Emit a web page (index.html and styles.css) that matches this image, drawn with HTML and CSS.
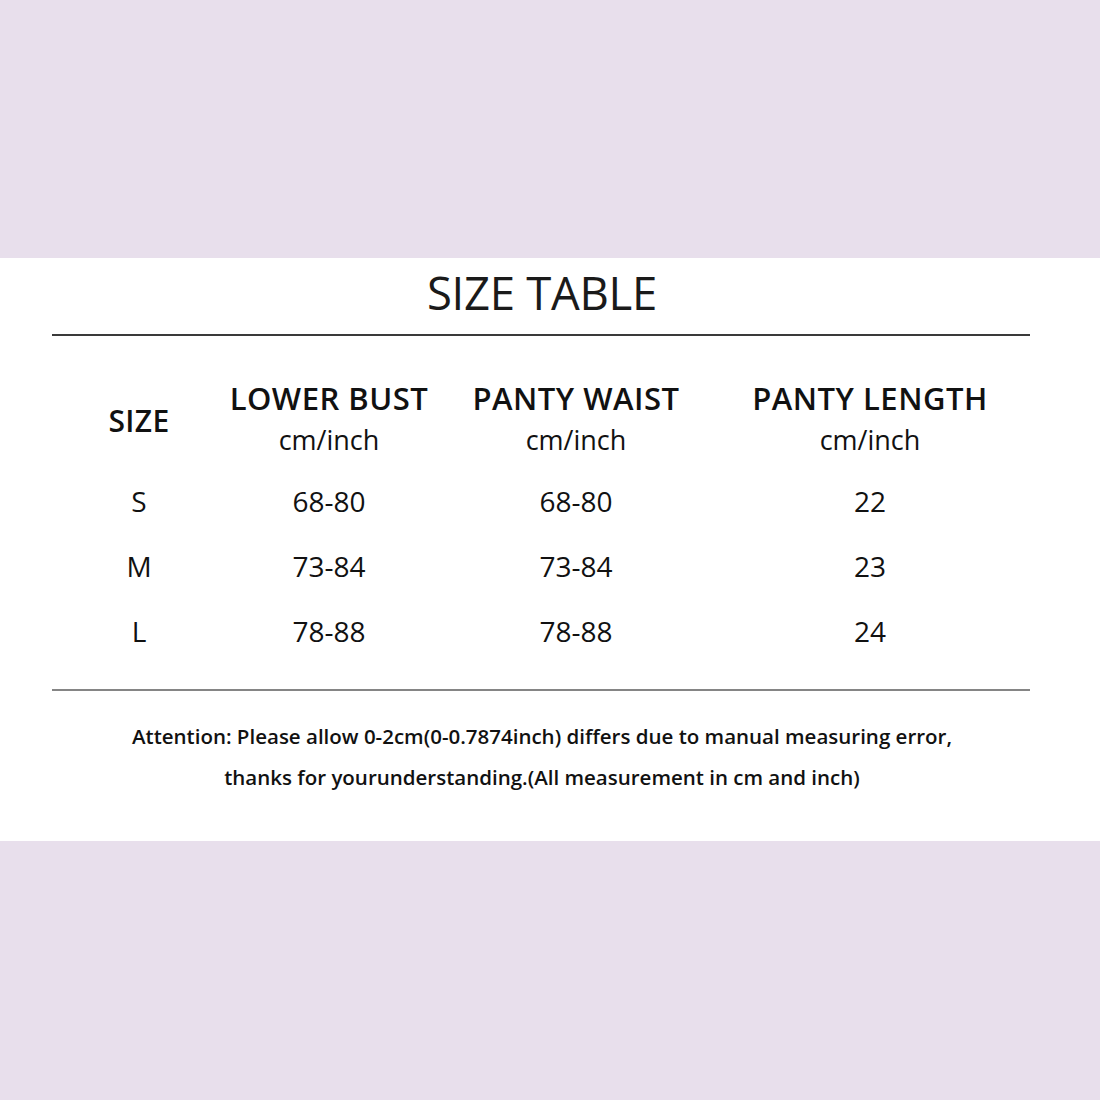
FILE: index.html
```html
<!DOCTYPE html>
<html lang="en">
<head>
<meta charset="utf-8">
<title>Size Table</title>
<link rel="stylesheet" href="styles.css">
</head>
<body>
<div class="band band-top"></div>
<section class="sheet">
  <h1 class="title">SIZE TABLE</h1>
  <div class="rule rule-top"></div>
  <div class="grid">
    <div class="hcell hsize">SIZE</div>
    <div class="hcell"><div class="hname">LOWER BUST</div><div class="hunit">cm/inch</div></div>
    <div class="hcell"><div class="hname">PANTY WAIST</div><div class="hunit">cm/inch</div></div>
    <div class="hcell"><div class="hname">PANTY LENGTH</div><div class="hunit">cm/inch</div></div>

    <div class="cell first-row">S</div><div class="cell first-row">68-80</div><div class="cell first-row">68-80</div><div class="cell first-row">22</div>
    <div class="cell">M</div><div class="cell">73-84</div><div class="cell">73-84</div><div class="cell">23</div>
    <div class="cell">L</div><div class="cell">78-88</div><div class="cell">78-88</div><div class="cell">24</div>
  </div>
  <div class="rule rule-bottom"></div>
  <p class="note">Attention: Please allow 0-2cm(0-0.7874inch) differs due to manual measuring error,<br>thanks for yourunderstanding.(All measurement in cm and inch)</p>
</section>
<div class="band band-bottom"></div>
</body>
</html>
```

FILE: styles.css
```css
html, body {
  margin: 0;
  padding: 0;
}
body {
  width: 1100px;
  height: 1100px;
  background: #e8dfec;
  font-family: "Open Sans", "Noto Sans", sans-serif;
  color: #111;
  display: flex;
  flex-direction: column;
}
.band-top {
  height: 258px;
  flex: none;
}
.band-bottom {
  flex: 1;
}
.sheet {
  background: #fff;
  height: 583px;
  flex: none;
  box-sizing: border-box;
  padding-top: 4px;
}
.title {
  margin: 0;
  font-size: 45.5px;
  font-weight: 400;
  line-height: 60px;
  text-align: center;
  color: #1a1a1a;
  padding-right: 16px;
  letter-spacing: -0.3px;
}
.rule {
  margin-left: 52px;
  width: 978px;
  height: 2px;
}
.rule-top {
  margin-top: 12px;
  background: #3a3a3a;
}
.rule-bottom {
  margin-top: 25px;
  background: #858585;
}
.grid {
  display: grid;
  grid-template-columns: 174px 206px 288px 300px;
  margin-left: 52px;
  margin-top: 44px;
  text-align: center;
}
.hcell {
  display: flex;
  flex-direction: column;
  align-items: center;
}
.hsize {
  justify-content: center;
  font-size: 30px;
  font-weight: 600;
  line-height: 36px;
  padding-top: 4px;
  letter-spacing: 0.3px;
}
.hname {
  font-size: 31px;
  font-weight: 600;
  line-height: 36px;
  white-space: nowrap;
  letter-spacing: 0.5px;
}
.hunit {
  font-size: 27px;
  font-weight: 400;
  line-height: 34px;
  margin-top: 7px;
}
.cell {
  font-size: 28px;
  line-height: 65px;
}
.first-row {
  margin-top: 12px;
}
.note {
  margin: 25px 0 0;
  font-size: 20.5px;
  font-weight: 600;
  line-height: 41px;
  text-align: center;
  padding-right: 16px;
}
```
